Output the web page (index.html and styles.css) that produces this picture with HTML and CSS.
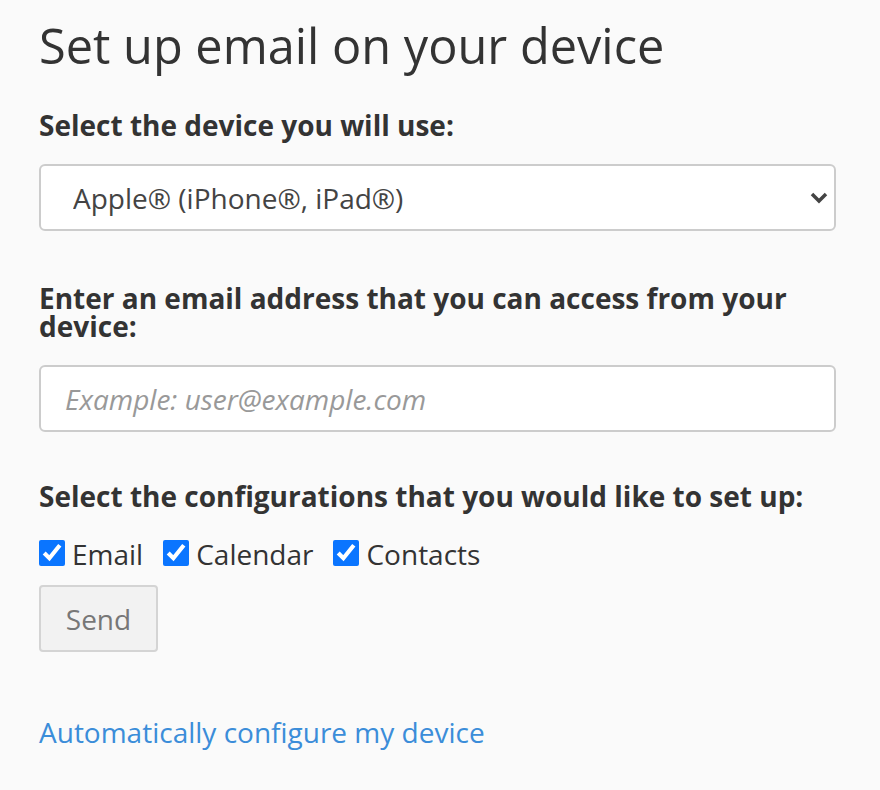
FILE: index.html
```html
<!DOCTYPE html>
<html lang="en">
<head>
  <meta charset="UTF-8">
  <title>Set up email on your device</title>
  <link rel="stylesheet" href="styles.css">
</head>
<body>
  <main class="setup">
    <h1>Set up email on your device</h1>

    <form class="setup-form">
      <label class="field-label" for="device">Select the device you will use:</label>
      <div class="select-wrap">
        <select id="device" class="control">
          <option>Apple® (iPhone®, iPad®)</option>
          <option>Android</option>
          <option>Other</option>
        </select>
        <svg class="chevron" viewBox="0 0 18 12" width="18" height="12">
          <path d="M2 2 L9 9 L16 2" fill="none" stroke="#444" stroke-width="3.5"/>
        </svg>
      </div>

      <label class="field-label" for="email">Enter an email address that you can access from your device:</label>
      <input id="email" class="control" type="text" placeholder="Example: user@example.com">

      <p class="field-label field-label--checks">Select the configurations that you would like to set up:</p>
      <div class="checks">
        <label class="check"><input type="checkbox" checked>Email</label>
        <label class="check"><input type="checkbox" checked>Calendar</label>
        <label class="check"><input type="checkbox" checked>Contacts</label>
      </div>
      <button type="button" class="send-btn" disabled>Send</button>
    </form>

    <p class="auto-row"><a href="#" class="auto-link">Automatically configure my device</a></p>
  </main>
</body>
</html>
```

FILE: styles.css
```css
body {
  margin: 0;
  background: #fafafa;
  font-family: 'Open Sans', sans-serif;
  font-size: 28px;
  line-height: 28px;
  color: #333;
}

.setup {
  width: 797px;
  padding: 18px 0 40px 39px;
}

h1 {
  margin: 0 0 39px;
  font-size: 48.7px;
  font-weight: 400;
  line-height: 54px;
}

.setup-form {
  display: flex;
  flex-direction: column;
}

.field-label {
  display: block;
  margin: 0 0 25px;
  font-size: 28px;
  font-weight: 700;
  line-height: 28px;
}

.field-label--checks {
  margin-bottom: 30px;
}

.select-wrap {
  position: relative;
  margin-bottom: 53px;
}

.control {
  box-sizing: border-box;
  width: 100%;
  height: 67px;
  border: 2px solid #ccc;
  border-radius: 6px;
  background: #fff;
  font-family: 'Open Sans', sans-serif;
  font-size: 28px;
  color: #444;
}

select.control {
  display: block;
  appearance: none;
  padding: 0 40px 0 32px;
}

input.control {
  margin-bottom: 50px;
  padding: 0 24px;
}

input.control::placeholder {
  color: #999;
  font-style: italic;
}

.chevron {
  position: absolute;
  right: 8px;
  top: 28px;
  pointer-events: none;
}

.checks {
  display: flex;
  gap: 20px;
  margin-bottom: 17px;
}

.check {
  display: flex;
  align-items: center;
  gap: 7px;
  line-height: 28px;
  color: #333;
}

.check input {
  width: 26px;
  height: 26px;
  margin: 0 0 2px;
  accent-color: #0a75ff;
}

.send-btn {
  align-self: flex-start;
  width: 119px;
  height: 67px;
  border: 2px solid #d4d4d4;
  border-radius: 4px;
  background: #f2f2f2;
  font-family: 'Open Sans', sans-serif;
  font-size: 28px;
  color: #777;
}

.auto-row {
  margin: 61px 0 0;
  line-height: 38px;
}

.auto-link {
  color: #3b8dd9;
  text-decoration: none;
}
```
